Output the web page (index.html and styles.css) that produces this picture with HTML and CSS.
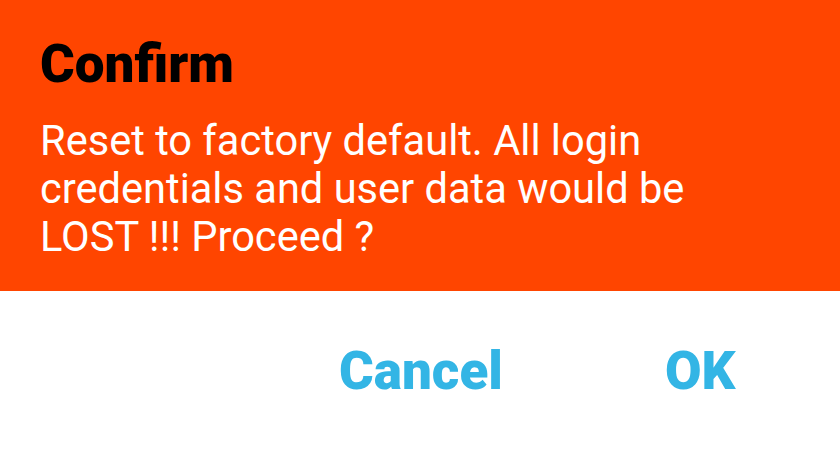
FILE: index.html
```html
<!DOCTYPE html>
<html>
<head>
<meta charset="utf-8">
<link rel="stylesheet" href="styles.css">
</head>
<body>
<div class="dialog">
  <div class="header">
    <h1 class="title">Confirm</h1>
    <p class="message">Reset to factory default. All login credentials and user data would be LOST !!! Proceed ?</p>
  </div>
  <div class="actions">
    <button class="btn cancel">Cancel</button>
    <button class="btn ok">OK</button>
  </div>
</div>
</body>
</html>
```
FILE: styles.css
```css
html, body {
  margin: 0;
  padding: 0;
  background: #ffffff;
  font-family: Roboto, "Liberation Sans", sans-serif;
}
.dialog {
  width: 840px;
  height: 449px;
  display: flex;
  flex-direction: column;
}
.header {
  background: #ff4500;
  height: 291px;
  box-sizing: border-box;
  padding: 34px 40px 0 40px;
}
.title {
  margin: 0;
  font-size: 53px;
  font-weight: 900;
  color: #000;
  line-height: 60px;
}
.message {
  margin: 23px 0 0 0;
  font-size: 41.6px;
  line-height: 48px;
  color: #fff;
  width: 700px;
}
.actions {
  display: flex;
  padding: 0 0 0 339px;
  margin-top: 50px;
}
.btn {
  background: none;
  border: 0;
  padding: 0;
  font-family: Roboto, "Liberation Sans", sans-serif;
  font-weight: 900;
  font-size: 53px;
  color: #33b5e5;
  line-height: 60px;
}
.ok {
  margin-left: 162px;
}
```
